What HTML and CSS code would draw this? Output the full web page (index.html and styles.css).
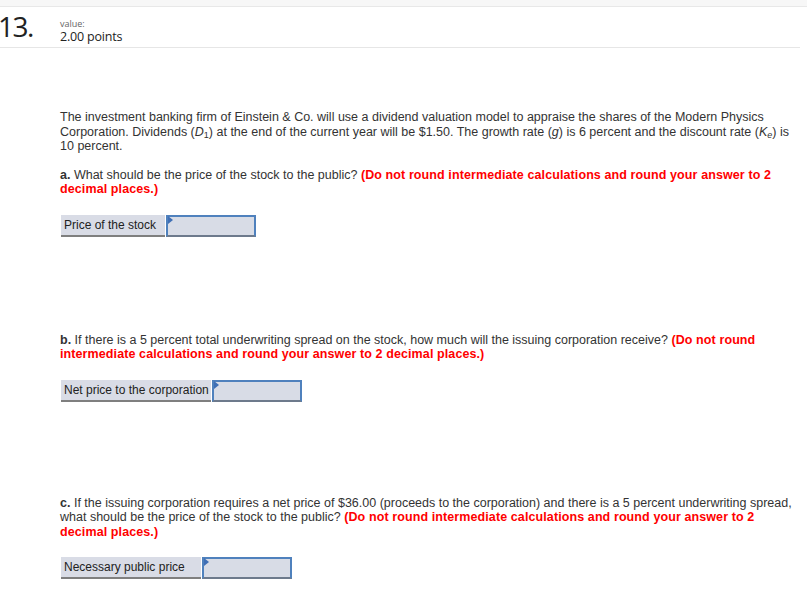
FILE: index.html
```html
<!DOCTYPE html>
<html>
<head>
<meta charset="utf-8">
<link rel="stylesheet" href="styles.css">
</head>
<body>
<div class="topband"></div>
<div class="header">
  <div class="qnum">13.</div>
  <div class="value">
    <div class="vlabel">value:</div>
    <div class="vpoints">2.00 points</div>
  </div>
</div>
<div class="content">
  <p class="intro">The investment banking firm of Einstein &amp; Co. will use a dividend valuation model to appraise the shares of the Modern Physics Corporation. Dividends (<i>D</i><sub>1</sub>) at the end of the current year will be $1.50. The growth rate (<i>g</i>) is 6 percent and the discount rate (<i>K</i><sub><i>e</i></sub>) is 10 percent.</p>
  <p class="q"><b>a.</b> What should be the price of the stock to the public? <span class="red">(Do not round intermediate calculations and round your answer to 2 decimal places.)</span></p>
  <div class="ans">
    <div class="lbl lbl-a">Price of the stock</div>
    <div class="inp w90"><span class="flag"></span></div>
  </div>

  <p class="q q-next"><b>b.</b> If there is a 5 percent total underwriting spread on the stock, how much will the issuing corporation receive? <span class="red">(Do not round intermediate calculations and round your answer to 2 decimal places.)</span></p>
  <div class="ans">
    <div class="lbl lbl-b">Net price to the corporation</div>
    <div class="inp w90"><span class="flag"></span></div>
  </div>

  <p class="q q-last"><b>c.</b> If the issuing corporation requires a net price of $36.00 (proceeds to the corporation) and there is a 5 percent underwriting spread, what should be the price of the stock to the public? <span class="red">(Do not round intermediate calculations and round your answer to 2 decimal places.)</span></p>
  <div class="ans">
    <div class="lbl lbl-c">Necessary public price</div>
    <div class="inp w90"><span class="flag"></span></div>
  </div>
</div>
</body>
</html>
```
FILE: styles.css
```css
html, body { margin: 0; padding: 0; background: #fff; }
body { font-family: "Liberation Sans", Arial, sans-serif; color: #333; }
.topband { height: 6px; background: #f7f7f7; border-bottom: 1px solid #e8e8e8; }
.header {
  display: flex; align-items: flex-start;
  height: 40px; margin-right: 7px;
  border-bottom: 1px solid #e6e6e6;
}
.qnum {
  width: 60px; font-family: "Open Sans", sans-serif; font-weight: 400;
  font-size: 28px; line-height: 32px; color: #222; margin-top: 3px; letter-spacing: -1.5px;
  text-indent: -2px;
}
.value { margin-top: 11px; }
.vlabel { font-family: "Open Sans", sans-serif; font-size: 9px; line-height: 11px; color: #666; }
.vpoints { font-family: "Open Sans", sans-serif; font-size: 12.5px; line-height: 16px; color: #222; letter-spacing: -0.2px; }
.content { padding: 0 7px 0 60px; font-size: 12.5px; line-height: 14.5px; }
p { margin: 0; }
.intro { margin-top: 62px; }
.q { margin-top: 14px; }
sub { font-size: 9px; line-height: 0; vertical-align: -2px; }
.red { color: #f00; font-weight: bold; letter-spacing: 0.1px; }
b { font-weight: bold; }
.ans { display: flex; margin-left: 1px; height: 22px; margin-top: 18px; }
.lbl {
  box-sizing: border-box;
  background: #d9dce6; border-bottom: 2px solid #7f7f7f;
  padding: 0 0 0 3px; font-size: 12px; line-height: 20px; white-space: nowrap; color: #222;
}
.lbl-a { width: 104px; }
.lbl-b { width: 150px; }
.lbl-c { width: 140px; }
.inp {
  position: relative; box-sizing: border-box; height: 22px;
  background: #d8dce6; border: 2px solid #4f81bd; border-bottom-color: #6d7a8c;
  margin-left: 1px;
}
.w90 { width: 90px; }
.flag {
  position: absolute; left: 0; top: -1px; width: 0; height: 0;
  border-top: 4px solid transparent; border-bottom: 4px solid transparent;
  border-left: 5px solid #3f6fb5;
}
.q-next { margin-top: 96px; }
.q-last { margin-top: 94px; }
```
